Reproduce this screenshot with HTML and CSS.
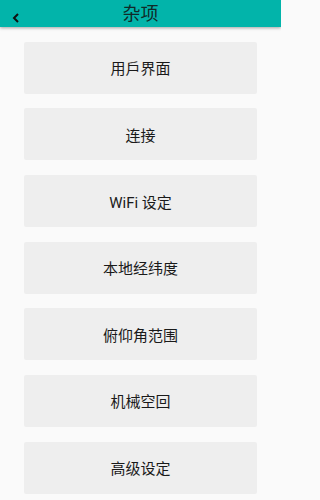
FILE: index.html
```html
<!DOCTYPE html>
<html lang="zh">
<head>
<meta charset="utf-8">
<link rel="stylesheet" href="styles.css">
</head>
<body>
<div class="screen">
<header class="appbar">
  <span class="back">
    <svg width="8" height="10" viewBox="0 0 8 10"><path d="M6 1 L2 5 L6 9" fill="none" stroke="#111" stroke-width="2"/></svg>
  </span>
  <h1 class="title">杂项</h1>
</header>
<main class="list">
  <div class="item">用戶界面</div>
  <div class="item">连接</div>
  <div class="item">WiFi 设定</div>
  <div class="item">本地经纬度</div>
  <div class="item">俯仰角范围</div>
  <div class="item">机械空回</div>
  <div class="item">高级设定</div>
</main>
</div>
</body>
</html>
```
FILE: styles.css
```css
html, body {
  margin: 0;
  padding: 0;
  background: #fafafa;
  font-family: Roboto, "Noto Sans CJK SC", sans-serif;
  overflow: hidden;
}
.screen {
  width: 281px;
  height: 500px;
  overflow: hidden;
}
.appbar {
  position: relative;
  height: 27px;
  background: #02b4aa;
  box-shadow: 0 1px 3px rgba(0,0,0,0.35);
  display: flex;
  align-items: center;
  justify-content: center;
  z-index: 2;
}
.back {
  position: absolute;
  left: 12px;
  top: 13px;
  display: flex;
}
.title {
  margin: 0;
  font-size: 18px;
  font-weight: normal;
  color: #102a28;
  line-height: 27px;
}
.list {
  padding-top: 14.7px;
  display: flex;
  flex-direction: column;
  gap: 14.67px;
  padding-left: 24px;
  width: 233px;
}
.item {
  height: 52px;
  background: #eeeeee;
  border-radius: 2px;
  display: flex;
  align-items: center;
  justify-content: center;
  font-size: 15px;
  color: #1a1a1a;
}
```
